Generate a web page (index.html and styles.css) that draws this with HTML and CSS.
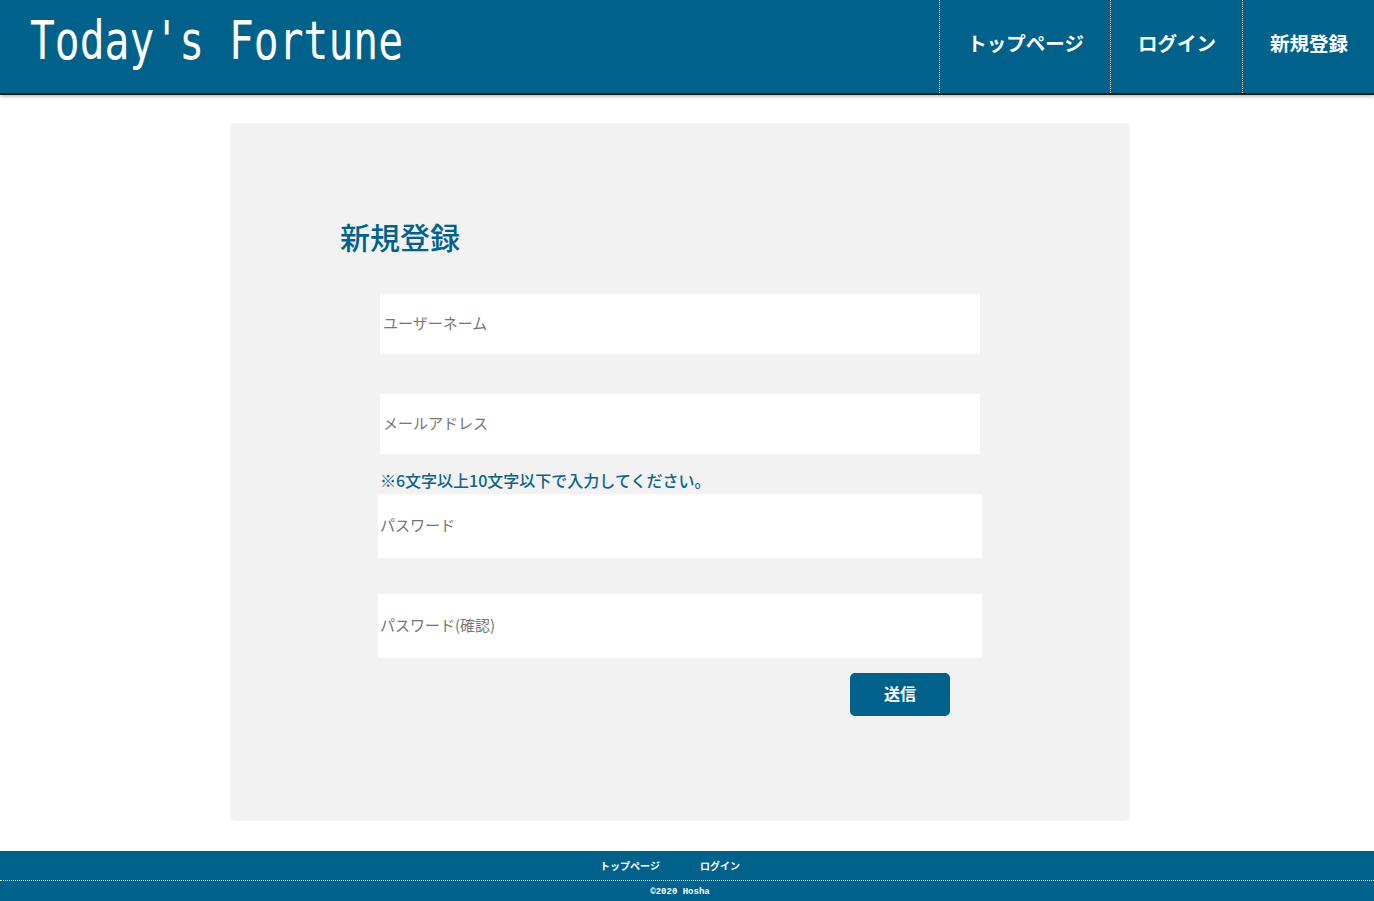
FILE: index.html
```html
<!DOCTYPE html>
<html lang="ja">
<head>
<meta charset="utf-8">
<title>Today's Fortune</title>
<link rel="stylesheet" href="styles.css">
</head>
<body>
<header class="site-header">
  <h1 class="logo">Today's Fortune</h1>
  <nav class="gnav">
    <a class="gnav-item" href="#">トップページ</a>
    <a class="gnav-item" href="#">ログイン</a>
    <a class="gnav-item" href="#">新規登録</a>
  </nav>
</header>

<main class="card">
  <h2 class="card-title">新規登録</h2>
  <form class="form">
    <input class="field" type="text" placeholder="ユーザーネーム">
    <input class="field field-gap" type="email" placeholder="メールアドレス">
    <p class="note">※6文字以上10文字以下で入力してください。</p>
    <input class="field field-pw" type="password" placeholder="パスワード">
    <input class="field field-pw field-gap2" type="password" placeholder="パスワード(確認)">
    <button class="submit" type="button">送信</button>
  </form>
</main>

<footer class="site-footer">
  <ul class="fnav">
    <li><a href="#">トップページ</a></li>
    <li><a href="#">ログイン</a></li>
  </ul>
  <p class="copy">&copy;2020 Hosha</p>
</footer>
</body>
</html>
```
FILE: styles.css
```css
* { box-sizing: border-box; }
body {
  margin: 0;
  background: #fff;
  font-family: "Noto Sans CJK JP", "Noto Sans", sans-serif;
}
a { color: inherit; text-decoration: none; }

.site-header {
  height: 93px;
  background: #00628a;
  display: flex;
  justify-content: space-between;
  align-items: stretch;
  box-shadow: 0 2px 0 #1c1c1c, 0 3px 4px rgba(0, 0, 0, 0.35);
  position: relative;
  z-index: 1;
}
.logo {
  margin: 0;
  padding-left: 30px;
  color: #fff;
  font-family: "DejaVu Sans Mono", "Liberation Mono", monospace;
  font-weight: normal;
  font-size: 54px;
  line-height: 93px;
  white-space: nowrap;
  transform: scaleX(0.765);
  transform-origin: 30px 50%;
  position: relative;
  top: -6px;
}
.gnav { display: flex; }
.gnav-item {
  display: flex;
  align-items: center;
  padding: 0 26px 8px 27px;
  border-left: 1px dotted #e6e6e6;
  color: #fff;
  font-size: 19.5px;
  font-weight: bold;
  white-space: nowrap;
}

.card {
  width: 900px;
  margin: 30px 0 30px calc(50% - 457px);
  background: #f2f2f2;
  border-radius: 5px;
  padding: 92px 110px 105px;
}
.card-title {
  margin: 0;
  padding-bottom: 2px;
  height: 45px;
  color: #00628a;
  font-size: 30px;
  line-height: 43px;
  font-weight: 500;
}
.form {
  display: flex;
  flex-direction: column;
  align-items: flex-start;
  margin: 34px 0 0 40px;
}
.field {
  display: block;
  width: 600px;
  height: 60px;
  border: none;
  background: #fff;
  padding: 0 3px 3px;
  font-family: inherit;
  font-size: 15px;
  outline: none;
}
.field::placeholder { color: #757575; }
.field-gap { margin-top: 40px; }
.field-pw {
  width: 604px;
  height: 64px;
  margin-left: -2px;
  padding: 0 2px 4px;
}
.field-gap2 { margin-top: 36px; }
.note {
  margin: 16px 0 2px;
  line-height: 20px;
  padding-bottom: 2px;
  color: #0b6489;
  font-size: 16px;
  font-weight: 500;
}
.submit {
  margin: 15px 0 0 470px;
  width: 100px;
  height: 43px;
  border: none;
  border-radius: 5px;
  background: #00628a;
  color: #fff;
  font-family: inherit;
  font-size: 16px;
  font-weight: bold;
  padding: 0 0 3px;
}

.site-footer {
  background: #00628a;
  color: #fff;
  height: 50px;
}
.fnav {
  list-style: none;
  margin: 0;
  padding: 0 34px 0 0;
  height: 30px;
  display: flex;
  justify-content: center;
  align-items: center;
  gap: 40px;
  border-bottom: 1px dotted #e6e6e6;
  font-size: 10px;
  font-weight: bold;
}
.copy {
  margin: 0;
  height: 19px;
  line-height: 23px;
  text-align: center;
  padding-right: 14px;
  font-family: "Liberation Mono", monospace;
  font-size: 9px;
  font-weight: bold;
}
```
